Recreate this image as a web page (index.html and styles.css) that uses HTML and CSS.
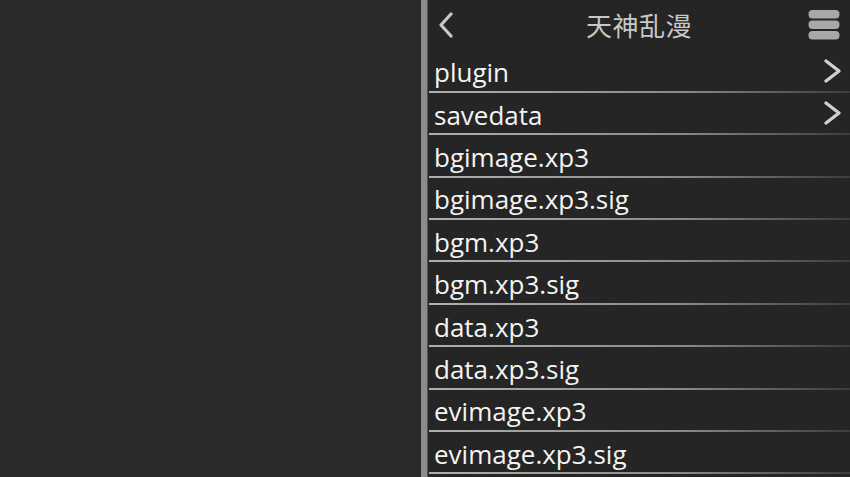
FILE: index.html
```html
<!DOCTYPE html>
<html>
<head>
<meta charset="utf-8">
<link rel="stylesheet" href="styles.css">
</head>
<body>
<div class="screen">
  <div class="left"></div>
  <div class="divider"></div>
  <div class="panel">
    <div class="header">
      <svg class="back" width="16" height="26" viewBox="0 0 16 26"><path d="M13 2 L3 13 L13 24" fill="none" stroke="#c8c8c8" stroke-width="3.2" stroke-linecap="round" stroke-linejoin="round"/></svg>
      <div class="title">天神乱漫</div>
      <svg class="menu" width="32" height="32" viewBox="0 0 32 32">
        <rect x="0.5" y="1" width="31" height="8.5" rx="4" fill="#a8a8a8"/>
        <rect x="0.5" y="11.5" width="31" height="8.5" rx="4" fill="#a8a8a8"/>
        <rect x="0.5" y="22" width="31" height="8.5" rx="4" fill="#a8a8a8"/>
      </svg>
    </div>
    <div class="list">
      <div class="row"><span class="name">plugin</span><svg class="chev" width="20" height="26" viewBox="0 0 20 26"><path d="M3 3 L16 13 L3 23" fill="none" stroke="#cfcfcf" stroke-width="3.4" stroke-linecap="round" stroke-linejoin="round"/></svg></div>
      <div class="row"><span class="name">savedata</span><svg class="chev" width="20" height="26" viewBox="0 0 20 26"><path d="M3 3 L16 13 L3 23" fill="none" stroke="#cfcfcf" stroke-width="3.4" stroke-linecap="round" stroke-linejoin="round"/></svg></div>
      <div class="row"><span class="name">bgimage.xp3</span></div>
      <div class="row"><span class="name">bgimage.xp3.sig</span></div>
      <div class="row"><span class="name">bgm.xp3</span></div>
      <div class="row"><span class="name">bgm.xp3.sig</span></div>
      <div class="row"><span class="name">data.xp3</span></div>
      <div class="row"><span class="name">data.xp3.sig</span></div>
      <div class="row"><span class="name">evimage.xp3</span></div>
      <div class="row"><span class="name">evimage.xp3.sig</span></div>
    </div>
  </div>
</div>
</body>
</html>
```
FILE: styles.css
```css
html, body {
  margin: 0;
  padding: 0;
  background: #2b2b2b;
  overflow: hidden;
}
.screen {
  display: flex;
  width: 850px;
  height: 477px;
  font-family: "Open Sans", "Noto Sans CJK SC", sans-serif;
}
.left {
  width: 421px;
  background: #2b2b2b;
}
.divider {
  width: 6px;
  background: #8c8c8c;
  border-right: 1px solid #555;
}
.panel {
  flex: 1;
  background: #252525;
  display: flex;
  flex-direction: column;
  padding-left: 1px;
}
.header {
  height: 50.5px;
  display: grid;
  grid-template-columns: 1fr auto 1fr;
  align-items: center;
  padding: 0 10px 0 9px;
  box-sizing: border-box;
}
.back {
  margin-top: -1px;
}
.title {
  color: #c8c8c8;
  font-family: "Noto Sans CJK SC", sans-serif;
  font-size: 26px;
  letter-spacing: 0.5px;
  margin-top: -2px;
}
.menu {
  justify-self: end;
  margin-top: -1px;
}
.list {
  display: flex;
  flex-direction: column;
}
.row {
  height: 42.4px;
  box-sizing: border-box;
  display: flex;
  align-items: center;
  justify-content: space-between;
  padding: 0 7px 0 5px;
  border-bottom: 2px solid #999;
  border-image: linear-gradient(to right, #b0b0b0, #8a8a8a 60%, #3c3c3c) 1;
}
.name {
  color: #f4f4f4;
  font-size: 26px;
  font-weight: 500;
  line-height: 1;
  margin-top: 3px;
}
```
